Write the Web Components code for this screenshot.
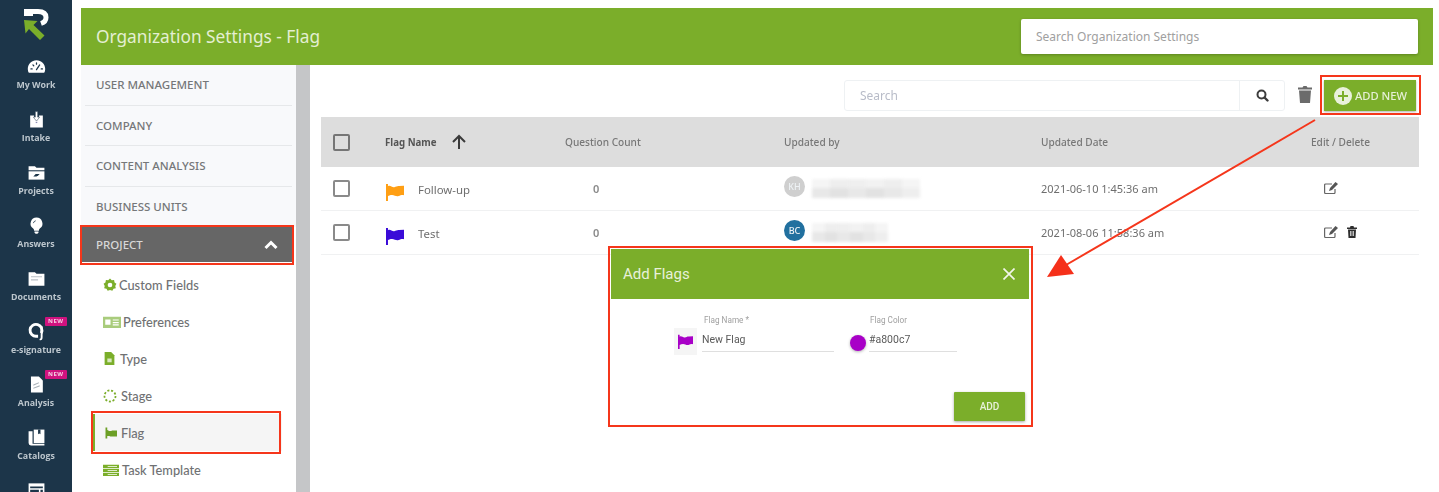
<!DOCTYPE html>
<html lang="en">

<head>
    <meta charset="UTF-8">
    <title>Organization Settings - Flag</title>
    <style>
        html, body { margin: 0; height: 100%; overflow: hidden; background: #fff; }
        body { font-family: "Noto Sans", "Liberation Sans", sans-serif; }
        /* the reference is a slightly soft upscaled capture */
        app-shell, add-flag-modal, callout-layer { filter: blur(.4px); }
    </style>
</head>

<body>
    <app-shell>
        <side-rail slot="rail">
            <rail-logo></rail-logo>
            <rail-item label="My Work" icon="gauge"></rail-item>
            <rail-item label="Intake" icon="intake"></rail-item>
            <rail-item label="Projects" icon="projects"></rail-item>
            <rail-item label="Answers" icon="bulb"></rail-item>
            <rail-item label="Documents" icon="folder"></rail-item>
            <rail-item label="e-signature" icon="esign" badge="NEW"></rail-item>
            <rail-item label="Analysis" icon="doc" badge="NEW"></rail-item>
            <rail-item label="Catalogs" icon="book"></rail-item>
            <rail-item label="" icon="window"></rail-item>
        </side-rail>

        <org-header slot="header" title="Organization Settings - Flag"></org-header>

        <settings-nav slot="nav">
            <nav-section>USER MANAGEMENT</nav-section>
            <nav-section>COMPANY</nav-section>
            <nav-section>CONTENT ANALYSIS</nav-section>
            <nav-section last>BUSINESS UNITS</nav-section>
            <nav-section open>PROJECT</nav-section>
            <nav-sub icon="gear" size="14" gap="2">Custom Fields</nav-sub>
            <nav-sub icon="card" size="18" gap="2">Preferences</nav-sub>
            <nav-sub icon="file" size="13" gap="4">Type</nav-sub>
            <nav-sub icon="ring" size="14" gap="4">Stage</nav-sub>
            <nav-sub icon="flag" size="12" gap="4" active>Flag</nav-sub>
            <nav-sub icon="list" size="16" gap="3">Task Template</nav-sub>
        </settings-nav>

        <flag-toolbar slot="main"></flag-toolbar>
        <flag-table slot="main">
            <flag-row name="Follow-up" color="#ff9f14" initials="KH" avatar="#cfcfcf" blur="108" date="2021-06-10 1:45:36 am"></flag-row>
            <flag-row name="Test" color="#3a0bd8" initials="BC" avatar="#21709f" blur="76" date="2021-08-06 11:58:36 am" deletable></flag-row>
        </flag-table>
    </app-shell>

    <add-flag-modal></add-flag-modal>
    <callout-layer></callout-layer>

    <script>
        // shared glyphs, all on a 24 box
        const ICONS = {
            gauge: '<path fill="#fff" d="M12 4C5.900 4 1 8.900 1 15c0 1.900.5 3.600 1.300 5h19.400c.8-1.400 1.300-3.100 1.300-5 0-6.100-4.900-11-11-11z"/><path stroke="#1c3549" stroke-width="1.600" stroke-linecap="round" d="M12 16l4-6M5 15h1.500M18 15h1.500M7.500 10l1 1M12 7.500v1.500"/>',
            intake: '<path fill="#fff" d="M4 7h5v2h6V7h5v15H4z"/><path fill="#fff" stroke="#1c3549" stroke-width=".6" d="M10.500 2h3v7H16l-4 5-4-5h2.500z"/><path fill="#8d8db5" d="M11 15h2v1.500h-2z"/>',
            projects: '<path fill="#fff" d="M2 4h8l2 2h10v3H2z"/><path fill="#fff" d="M2 10.500h20V21H2z"/><path fill="#1c3549" d="M8 17l3-3h5l-1.500 1.500L12 17z"/>',
            bulb: '<path fill="#fff" d="M12 2a7.500 7.500 0 0 0-4.500 13.500c1 .8 1.500 1.800 1.500 3h6c0-1.200.5-2.200 1.500-3A7.500 7.500 0 0 0 12 2z"/><path fill="#fff" d="M9.500 19.500h5V21l-1.500 1.500h-2L9.500 21z"/><path fill="none" stroke="#1c3549" stroke-width="1" d="M8 9a4 4 0 0 1 3-3"/>',
            folder: '<path fill="#fff" d="M2 4h8l2 2h10v15H2z"/><path fill="#b9c0c6" d="M5 9h14v1.500H5zM5 13h9v1.500H5z"/>',
            esign: '<path fill="none" stroke="#fff" stroke-width="3.600" d="M18 14A7.500 7.500 0 1 0 12 18h2"/><path fill="none" stroke="#fff" stroke-width="2.400" stroke-linecap="round" d="M18.500 6v13c0 2-.5 3-1.500 3"/>',
            doc: '<path fill="#fff" d="M5 2h10l5 5v15H5z"/><path fill="#a9b1b8" d="M8 12l7-3v1.500l-7 3zM8 16l8-3v1.500l-8 3z"/>',
            book: '<path fill="#fff" d="M2 4h5v16h15v2H5a3 3 0 0 1-3-3z"/><path fill="#fff" d="M8.500 2H22v17H8.500z"/><path fill="#1c3549" d="M14 2h3v6l-1.500-1-1.500 1z"/>',
            window: '<path fill="#fff" d="M2 3h20v19H2z"/><path fill="#1c3549" d="M4 7h16v2H4zM4 11h11v4H4zM17 11h3v9h-3z"/>',
            gear: '<path fill="#7bae2a" d="M12 1l3 3 4-.5.8 4 3.200 2.500-2 3.500 1 4-4 1-2 3.500-4-1.500-4 1.500-2-3.500-4-1 1-4-2-3.500L4.200 7.500 5 3.500 9 4z"/><circle cx="12" cy="12" r="4" fill="#fff"/>',
            card: '<path fill="#a9cc7c" d="M0 5h24v15H0z"/><path fill="#fff" d="M3 8.500h7v7H3zM13 8.500h8V10h-8zM13 12h8v1.500h-8zM13 15h8v1.500h-8z"/>',
            file: '<path fill="#7bae2a" d="M3 0h12l6 6v18H3z"/><path fill="#d8e8bf" d="M8 12h8v7H8z"/>',
            ring: '<circle cx="12" cy="12" r="9.500" fill="none" stroke="#7bae2a" stroke-width="3" stroke-dasharray="3.500 3"/>',
            flag: '<path fill="#6c9f26" d="M1 1h3.500v22H1zM4.500 6c2 0 2 2 4 2h3c2 0 2-1 3-1H24v12H12c-2 0-3-1-4-1H4.500z"/>',
            list: '<path fill="#7bae2a" d="M0 4h24v5H0zM0 10h24v5H0zM0 16h24v5H0z"/><path fill="#fff" d="M7 6h14v1H7zM7 12h14v1H7zM7 18h14v1H7z"/>'
        };

        function icon(name, size) {
            return `<svg width="${size}" height="${size}" viewBox="0 0 24 24" fill="none">${ICONS[name]}</svg>`;
        }

        function flagSvg(color, w, h) {
            return `<svg width="${w}" height="${h}" viewBox="0 0 20 20"><path fill="${color}" d="M0 1h2.200v19H0zM2.200 3.500c2.400-1.600 4.300 1.500 7 1.100 2-.3 3.400-1.600 5.300-1.200L20 3v10.500c-2.400-.6-4 .2-6 1-2.600 1-4.400-1.200-7.200-1.200-1.800 0-3.200.5-4.600 1.200z"/></svg>`;
        }

        class AppShell extends HTMLElement {
            constructor() {
                super();
                this.attachShadow({ mode: "open" }).innerHTML = `<style>
                    :host { display: grid; grid-template-columns: 72px 1fr; height: 492px; overflow: hidden; }
                    .page { padding: 8px 6px 0 9px; min-width: 0; }
                    .body { display: grid; grid-template-columns: 215px 14px 1fr; height: 427px; }
                    .scroll { background: #c5c6c8; }
                    .main { padding: 15px 14px 0 11px; min-width: 0; }
                </style>
                <slot name="rail"></slot>
                <div class="page">
                    <slot name="header"></slot>
                    <div class="body">
                        <slot name="nav"></slot>
                        <div class="scroll"></div>
                        <div class="main"><slot name="main"></slot></div>
                    </div>
                </div>`;
            }
        }

        class SideRail extends HTMLElement {
            constructor() {
                super();
                this.attachShadow({ mode: "open" }).innerHTML = `<style>
                    :host { display: flex; flex-direction: column; align-items: stretch; background: #1c3549; padding-top: 5px; height: 492px; box-sizing: border-box; overflow: hidden; }
                </style><slot></slot>`;
            }
        }

        class RailLogo extends HTMLElement {
            constructor() {
                super();
                this.attachShadow({ mode: "open" }).innerHTML = `<style>
                    :host { display: flex; justify-content: center; height: 50px; flex: none; }
                    svg { margin-top: 3px; }
                </style>
                <svg width="26" height="33" viewBox="0 0 26 33">
                    <path fill="none" stroke="#fff" stroke-width="5" d="M1 3.500h14c5 0 8 2 8 6 0 3-2 5-5 6"/>
                    <path fill="#fff" d="M1 1h9v7H1z"/>
                    <path fill="#7bae2a" d="M1 12l13.500 1-4 4 11 10.500-4.500 4.500-11-11-3.500 4.500z"/>
                </svg>`;
            }
        }

        class RailItem extends HTMLElement {
            connectedCallback() {
                const label = this.getAttribute("label");
                const badge = this.getAttribute("badge");
                this.attachShadow({ mode: "open" }).innerHTML = `<style>
                    :host { display: flex; flex-direction: column; align-items: center; height: 53px; flex: none; position: relative; }
                    .ic { height: 20px; margin-top: 1px; display: flex; align-items: center; }
                    .txt { font: 700 8.800px/12px "Open Sans", "Noto Sans", sans-serif; color: #bcc6cd; margin-top: 3px; white-space: nowrap; }
                    .new { position: absolute; top: -3px; left: 45px; background: #d0127f; color: #f4cfe4; font: 700 6px/9px "Open Sans", sans-serif; padding: 0 3px; border-radius: 1px; letter-spacing: .5px; }
                </style>
                <div class="ic">${icon(this.getAttribute("icon"), 19)}</div>
                <div class="txt">${label}</div>
                ${badge ? `<div class="new">${badge}</div>` : ""}`;
            }
        }

        class OrgHeader extends HTMLElement {
            connectedCallback() {
                this.attachShadow({ mode: "open" }).innerHTML = `<style>
                    :host { display: flex; align-items: center; justify-content: space-between; height: 57px; background: #7bae2a; padding: 0 15px; box-sizing: border-box; }
                    h1 { margin: 0; font: 400 17.300px "Noto Sans", sans-serif; color: #e4efd2; }
                    .search { width: 397px; height: 35px; background: #fff; border-radius: 2px; box-shadow: 0 1px 3px rgba(0,0,0,.25); font: 12px/35px "Noto Sans", sans-serif; color: #a0a0a0; padding-left: 15px; box-sizing: border-box; }
                </style>
                <h1>${this.getAttribute("title")}</h1>
                <div class="search">Search Organization Settings</div>`;
            }
        }

        class SettingsNav extends HTMLElement {
            constructor() {
                super();
                this.attachShadow({ mode: "open" }).innerHTML = `<style>
                    :host { display: block; background: linear-gradient(#f8f9fb 0 162px, #fff 162px); overflow: hidden; }
                </style><slot></slot>`;
            }
        }

        class NavSection extends HTMLElement {
            connectedCallback() {
                const open = this.hasAttribute("open");
                this.attachShadow({ mode: "open" }).innerHTML = `<style>
                    :host { display: flex; align-items: center; justify-content: space-between; box-sizing: border-box; height: 40.500px; margin: 0 4px 0 4px; padding: 0 11px; font: 500 11.500px "Noto Sans", sans-serif; color: #757779; border-bottom: 1px solid #e6e8ea; }
                    :host([last]) { border-bottom: 0; }
                    :host([open]) { background: #666; color: #d8d8d8; border: 0; height: 35px; margin: 0 4px 4px 1px; padding: 0 14px; }
                    svg { display: block; }
                </style>
                <span><slot></slot></span>
                ${open ? '<svg width="14" height="10" viewBox="0 0 14 10"><path fill="none" stroke="#fff" stroke-width="3" d="M1.500 8L7 2.500 12.500 8"/></svg>' : ""}`;
            }
        }

        class NavSub extends HTMLElement {
            connectedCallback() {
                const gap = this.getAttribute("gap");
                this.attachShadow({ mode: "open" }).innerHTML = `<style>
                    :host { display: flex; align-items: center; height: 37px; padding-left: 22px; font: 500 12.800px Lato, sans-serif; color: #6f7173; gap: ${gap}px; box-sizing: border-box; }
                    :host([active]) { background: #f5f5f5; border-left: 2px solid #7bae2a; margin: 0 14px 0 12px; padding-left: 10px; }
                    svg { flex: none; display: block; }
                </style>
                ${icon(this.getAttribute("icon"), this.getAttribute("size"))}<span><slot></slot></span>`;
            }
        }

        class FlagToolbar extends HTMLElement {
            constructor() {
                super();
                this.attachShadow({ mode: "open" }).innerHTML = `<style>
                    :host { display: flex; align-items: flex-start; justify-content: flex-end; height: 31px; margin-bottom: 6px; padding-right: 3px; }
                    .box { display: flex; width: 441px; height: 31px; border: 1px solid #eef1f3; border-radius: 3px; box-sizing: border-box; background: #fff; }
                    .in { flex: 1; font: 12px/29px "Noto Sans", sans-serif; color: #b8bcc8; padding-left: 15px; border-right: 1px solid #eef1f3; }
                    .go { width: 44px; display: flex; align-items: center; justify-content: center; }
                    .del { margin: 5px 12px 0 13px; display: block; }
                    .add { display: flex; align-items: center; width: 92px; height: 31px; background: #7bae2a; box-sizing: border-box; padding-left: 10px; font: 500 11.200px "Noto Sans", sans-serif; color: #e6f0d6; box-shadow: 0 1px 2px rgba(0,0,0,.3); white-space: nowrap; }
                    .add svg { margin-right: 3px; flex: none; }
                </style>
                <div class="box">
                    <div class="in">Search</div>
                    <div class="go"><svg width="13" height="13" viewBox="0 0 13 13"><circle cx="5.500" cy="5.500" r="4" fill="none" stroke="#3d3d3d" stroke-width="2"/><path stroke="#3d3d3d" stroke-width="2.400" stroke-linecap="round" d="M8.500 8.500L11.500 11.500"/></svg></div>
                </div>
                <svg class="del" width="14" height="18" viewBox="0 0 14 18"><path fill="#6b6b6b" d="M0 2.500h4.500L5.500 1h3l1 1.500H14V4.500H0zM1 5.500h12L12 18H2z"/></svg>
                <div class="add">
                    <svg width="18" height="18" viewBox="0 0 18 18"><circle cx="9" cy="9" r="9" fill="#e9f1dc"/><path stroke="#7bae2a" stroke-width="2" d="M9 4v10M4 9h10"/></svg>ADD NEW
                </div>`;
            }
        }

        class FlagTable extends HTMLElement {
            constructor() {
                super();
                this.attachShadow({ mode: "open" }).innerHTML = `<style>
                    :host { display: block; font: 10.100px "Noto Sans", sans-serif; color: #6a6a6a; }
                    .head { display: grid; grid-template-columns: 64px 180px 219px 257px 270px 1fr; align-items: center; height: 50px; background: #ddd; font-weight: 500; color: #777; }
                    .cb { width: 17px; height: 17px; margin-left: 12px; border: 2px solid #757575; border-radius: 2px; box-sizing: border-box; }
                    .name { display: flex; align-items: center; gap: 14px; font-weight: 700; font-size: 9.700px; color: #555; }
                </style>
                <div class="head">
                    <div class="cb"></div>
                    <div class="name">Flag Name
                        <svg width="16" height="16" viewBox="0 0 16 16"><path fill="none" stroke="#3a3a3a" stroke-width="2" d="M8 15V2M2 8l6-6 6 6"/></svg>
                    </div>
                    <div>Question Count</div>
                    <div>Updated by</div>
                    <div>Updated Date</div>
                    <div>Edit / Delete</div>
                </div>
                <slot></slot>`;
            }
        }

        class FlagRow extends HTMLElement {
            connectedCallback() {
                const a = n => this.getAttribute(n);
                const cells = [.35, .6, .55, .45, .6, .35, .8, 1, .8, 1, .8, .6];
                const blur = cells.map(o => `<i style="opacity:${o}"></i>`).join("");
                const trash = this.hasAttribute("deletable")
                    ? '<svg width="10" height="12" viewBox="0 0 10 12"><path fill="#2e2e2e" d="M0 1.500h3L3.500 0h3L7 1.500h3V3H0zM1 3.500h8L8.500 12h-7z"/><path stroke="#fff" stroke-width=".7" d="M3.500 5v5M5 5v5M6.500 5v5"/></svg>' : "";
                this.attachShadow({ mode: "open" }).innerHTML = `<style>
                    :host { display: grid; grid-template-columns: 64px 180px 219px 257px 270px 1fr; align-items: center; height: 44px; border-bottom: 1px solid #f0f1f2; box-sizing: border-box; font: 11px "Noto Sans", sans-serif; color: #6e6e6e; }
                    .cb { width: 17px; height: 17px; margin-left: 12px; border: 2px solid #8a8a8a; border-radius: 2px; box-sizing: border-box; margin-top: -1px; }
                    .name { display: flex; align-items: center; gap: 13px; margin-top: 1px; font-size: 11.400px; }
                    .name svg { margin-top: 5px; }
                    .count { padding-left: 28px; font-weight: 600; color: #8a8a8a; }
                    .by { display: flex; align-items: flex-start; gap: 7px; margin-top: -4px; }
                    .av { width: 21px; height: 21px; border-radius: 50%; background: ${a("avatar")}; color: #eef2f5; font: 500 9px/21px "Noto Sans", sans-serif; text-align: center; flex: none; }
                    .blur { display: grid; grid-template-columns: repeat(6, 1fr); width: ${a("blur")}px; height: 19px; margin-top: 3px; filter: blur(1.500px); }
                    .blur i { background: #e2e2e2; }
                    .act { display: flex; align-items: center; gap: 9px; padding-left: 13px; margin-top: -1px; }
                </style>
                <div class="cb"></div>
                <div class="name">${flagSvg(a("color"), 20, 18)}<span>${a("name")}</span></div>
                <div class="count">0</div>
                <div class="by"><div class="av">${a("initials")}</div><div class="blur">${blur}</div></div>
                <div class="date">${a("date")}</div>
                <div class="act">
                    <svg width="14" height="12" viewBox="0 0 14 12"><path fill="none" stroke="#666" stroke-width="1.200" d="M11 7v3.500a1 1 0 0 1-1 1H1.600a1 1 0 0 1-1-1V3a1 1 0 0 1 1-1H8"/><path fill="#555" d="M11.500 0L14 2l-6 6-3 1 1-3z"/></svg>
                    ${trash}
                </div>`;
            }
        }

        class AddFlagModal extends HTMLElement {
            constructor() {
                super();
                this.attachShadow({ mode: "open" }).innerHTML = `<style>
                    :host { display: block; position: absolute; left: 611px; top: 249px; width: 418px; height: 175px; background: #fff; }
                    .top { display: flex; align-items: center; justify-content: space-between; height: 50px; background: #7bae2a; padding: 0 14px 0 12px; color: #e8f1da; font: 400 15px Roboto, sans-serif; box-sizing: border-box; }
                    .form { display: flex; align-items: flex-start; height: 82px; padding: 16px 0 0 63px; box-sizing: border-box; }
                    .field { display: flex; align-items: flex-end; }
                    .pick { width: 23px; height: 27px; background: #f5f5f5; display: flex; align-items: center; justify-content: center; margin-bottom: -3px; }
                    .dot { width: 16px; height: 16px; border-radius: 50%; background: #a800c7; box-shadow: 0 1px 3px rgba(0,0,0,.3); margin: 0 0 1px 1px; }
                    label { display: block; font: 8.200px/11px Roboto, sans-serif; color: #a0a0a0; padding-left: 2px; margin-bottom: 4px; }
                    .line { font: 10.500px/20px Roboto, sans-serif; color: #5a5a5a; border-bottom: 1px solid #dfdfdf; height: 21px; }
                    .foot { display: flex; justify-content: flex-end; padding: 11px 4px 0 0; }
                    .btn { width: 71px; height: 29px; background: #7bae2a; color: #e8f1da; font: 500 10px/29px Roboto, sans-serif; text-align: center; box-shadow: 0 1px 3px rgba(0,0,0,.35); border-radius: 1px; }
                </style>
                <div class="top"><span>Add Flags</span>
                    <svg width="12" height="12" viewBox="0 0 12 12"><path stroke="#f2f6ea" stroke-width="1.700" d="M.5.500l11 11M11.500.500l-11 11"/></svg>
                </div>
                <div class="form">
                    <div class="field" style="width:175px">
                        <div class="pick">${flagSvg("#a800c7", 17, 15)}</div>
                        <div style="width:132px;margin-left:5px"><label>Flag Name *</label><div class="line">New Flag</div></div>
                    </div>
                    <div class="field">
                        <div class="dot"></div>
                        <div style="width:88px;margin-left:3px"><label style="padding-left:1px">Flag Color</label><div class="line">#a800c7</div></div>
                    </div>
                </div>
                <div class="foot"><div class="btn">ADD</div></div>`;
            }
        }

        // red annotations drawn on top of the screenshot
        class CalloutLayer extends HTMLElement {
            constructor() {
                super();
                this.attachShadow({ mode: "open" }).innerHTML = `<style>
                    :host { display: block; position: absolute; inset: 0; width: 1439px; height: 492px; pointer-events: none; }
                    svg { display: block; }
                </style>
                <svg width="1439" height="492" viewBox="0 0 1439 492" fill="none" stroke="#f5361b" stroke-width="2">
                    <rect x="81" y="226" width="212" height="38"/>
                    <rect x="92" y="412" width="188" height="41"/>
                    <rect x="1321" y="76" width="99" height="38"/>
                    <rect x="609" y="247" width="423" height="179"/>
                    <path d="M1315 120L1066 265"/>
                    <path fill="#f5301a" stroke="none" d="M1047 277L1074 274L1061 255z"/>
                </svg>`;
            }
        }

        customElements.define('app-shell', AppShell);
        customElements.define('side-rail', SideRail);
        customElements.define('rail-logo', RailLogo);
        customElements.define('rail-item', RailItem);
        customElements.define('org-header', OrgHeader);
        customElements.define('settings-nav', SettingsNav);
        customElements.define('nav-section', NavSection);
        customElements.define('nav-sub', NavSub);
        customElements.define('flag-toolbar', FlagToolbar);
        customElements.define('flag-table', FlagTable);
        customElements.define('flag-row', FlagRow);
        customElements.define('add-flag-modal', AddFlagModal);
        customElements.define('callout-layer', CalloutLayer);
    </script>
</body>

</html>
